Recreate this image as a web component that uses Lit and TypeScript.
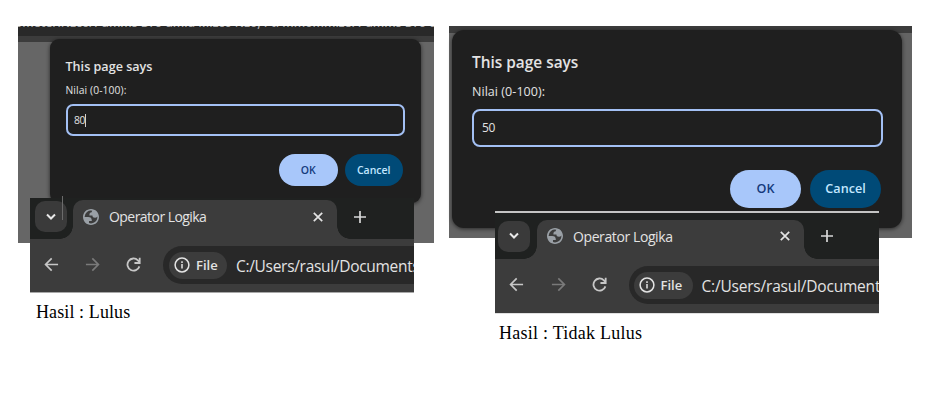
import { LitElement, html, css, svg } from "lit";
import { customElement, property } from "lit/decorators.js";

@customElement("prompt-dialog")
class PromptDialog extends LitElement {
  @property() value = "";
  @property({ type: Boolean }) caret = false;

  static styles = css`
    :host {
      display: flex;
      flex-direction: column;
      box-sizing: border-box;
      background: #1f1f1f;
      border-radius: var(--r);
      box-shadow: 0 1px 4px rgba(0, 0, 0, 0.6);
      font-family: "Open Sans", "Noto Sans", sans-serif;
      color: #e3e3e3;
      white-space: nowrap;
      padding: var(--pad);
    }
    .title {
      font-weight: 600;
      font-size: var(--title);
      line-height: var(--title-lh);
    }
    .label {
      font-size: var(--label);
      line-height: var(--label-lh);
      letter-spacing: var(--label-ls, 0);
    }
    .field {
      box-sizing: border-box;
      height: var(--field-h);
      margin-top: var(--field-mt);
      border: 2px solid #a3c0f4;
      border-radius: var(--field-r);
      display: flex;
      align-items: center;
      padding-left: var(--field-pad);
      font-size: var(--value);
      letter-spacing: var(--value-ls, 0);
    }
    .caret {
      width: 1px;
      height: 13px;
      background: #d0d0d0;
    }
    .actions {
      display: flex;
      justify-content: flex-end;
      gap: var(--btn-gap);
      margin-top: var(--btn-mt);
      padding-right: 2px;
    }
    .btn {
      width: var(--btn-w);
      height: var(--btn-h);
      border-radius: 99px;
      display: flex;
      align-items: center;
      justify-content: center;
      font-weight: 600;
      font-size: var(--btn-fs);
      background: #004a77;
      color: #c2e7ff;
    }
    .ok {
      background: #a8c7fa;
      color: #143a7c;
    }
  `;

  render() {
    return html`
      <div class="title">This page says</div>
      <div class="label">Nilai (0-100):</div>
      <div class="field">
        <span>${this.value}</span>${this.caret ? html`<span class="caret"></span>` : ""}
      </div>
      <div class="actions">
        <div class="btn ok">OK</div>
        <div class="btn">Cancel</div>
      </div>
    `;
  }
}

const icon = (cls: string, box: string, body: unknown) =>
  html`<svg class=${cls} viewBox=${box} fill="none">${body}</svg>`;

@customElement("browser-strip")
class BrowserStrip extends LitElement {
  static styles = css`
    :host {
      display: flex;
      flex-direction: column;
      box-sizing: border-box;
      overflow: hidden;
      background: #3c3c3c;
      font-family: "Open Sans", "Noto Sans", sans-serif;
      color: #e3e3e3;
      white-space: nowrap;
    }
    svg {
      display: block;
      flex: none;
    }
    .tabs {
      display: flex;
      height: var(--tabs-h);
      flex: none;
      background: #1f2120;
    }
    .left {
      box-sizing: border-box;
      width: var(--left-w);
      flex: none;
      padding: var(--menu-pad);
      background: radial-gradient(circle at 0 0, transparent 12.5px, #3c3c3c 13px) right bottom / 13px 13px no-repeat;
    }
    .menu {
      width: 32px;
      height: 31px;
      border-radius: 10px;
      background: #3a3a3a;
      display: flex;
      align-items: center;
      justify-content: center;
    }
    .tab {
      box-sizing: border-box;
      width: var(--tab-w);
      flex: none;
      margin-top: var(--tab-mt);
      border-radius: 10px 10px 0 0;
      background: #3c3c3c;
      display: flex;
      align-items: center;
      padding: 0 14px 6px 10px;
    }
    .name {
      font-size: 14px;
      letter-spacing: var(--name-ls);
      margin-left: 10px;
      flex: 1;
    }
    .rest {
      flex: 1;
      display: flex;
      padding: var(--plus-pad);
      background: radial-gradient(circle at 100% 0, transparent 12.5px, #3c3c3c 13px) left bottom / 13px 13px no-repeat;
    }
    .bar {
      flex: 1;
      display: flex;
      padding: 7px 0 0 14px;
      align-items: flex-start;
    }
    .nav {
      display: flex;
      gap: var(--nav-gap);
      padding-top: 11px;
      width: var(--nav-w);
      flex: none;
    }
    .omni {
      box-sizing: border-box;
      height: 38px;
      flex: none;
      width: 400px;
      border-radius: 19px;
      background: #282828;
      display: flex;
      align-items: center;
      padding-left: var(--omni-pad);
    }
    .chip {
      box-sizing: border-box;
      width: var(--chip-w);
      height: 27px;
      flex: none;
      border-radius: 14px;
      background: #3c3c3c;
      display: flex;
      align-items: center;
      padding-left: 5px;
      gap: 6px;
      font-size: 13px;
      font-weight: 600;
    }
    .url {
      font-size: 15.5px;
      letter-spacing: var(--url-ls);
      margin-left: 9px;
      padding-top: 1px;
    }
    .i16 { width: 16px; height: 16px; }
    .nav .i16 { width: 15px; height: 15px; }
    .i10 { width: 10px; height: 10px; }
    .i12 { width: 12px; height: 12px; }
  `;

  render() {
    return html`
      <div class="tabs">
        <div class="left">
          <div class="menu">
            ${icon("i10", "0 0 10 10", svg`<path d="M1 2.500l4 4 4-4" stroke="#e8e8e8" stroke-width="2"/>`)}
          </div>
        </div>
        <div class="tab">
          ${icon("i16", "2 2 20 20", svg`<path fill="#9aa0a6" fill-rule="evenodd" d="M12 2C6.48 2 2 6.48 2 12s4.48 10 10 10 10-4.480 10-10S17.520 2 12 2zM4 12h4.400c3.407.022 4.922 1.730 4.543 5.127H9.488v2.470a8.004 8.004 0 0 0 10.498-8.083C19.327 12.504 18.332 13 17 13c-2.137 0-3.206-.916-3.206-2.750h-3.748c-.274-2.728.683-4.092 2.870-4.092 0-.975.327-1.597.811-1.970A8.004 8.004 0 0 0 4 12z"/>`)}
          <span class="name">Operator Logika</span>
          ${icon("i10", "0 0 10 10", svg`<path d="M.8.8l8.400 8.400M9.200.8L.8 9.200" stroke="#e3e3e3" stroke-width="1.700"/>`)}
        </div>
        <div class="rest">
          ${icon("i12", "0 0 12 12", svg`<path d="M6 0v12M0 6h12" stroke="#d8d8d8" stroke-width="1.700"/>`)}
        </div>
      </div>
      <div class="bar">
        <div class="nav">
          ${icon("i16", "0 0 16 16", svg`<path d="M15 8H2M8.200 1.500L1.700 8l6.500 6.500" stroke="#c7c7c7" stroke-width="1.800"/>`)}
          ${icon("i16", "0 0 16 16", svg`<path d="M1 8h13M7.800 1.500L14.300 8l-6.500 6.500" stroke="#7a7a7a" stroke-width="1.800"/>`)}
          ${icon("i16", "0 0 16 16", svg`<path d="M14.300 10A6.500 6.500 0 1 1 12.700 3.500L14.500 5.500M14.600 .8v5.600H9" stroke="#c7c7c7" stroke-width="1.900"/>`)}
        </div>
        <div class="omni">
          <div class="chip">
            ${icon("i16", "0 0 16 16", svg`<circle cx="8" cy="8" r="6.900" stroke="#e3e3e3" stroke-width="1.500"/><path d="M8 7v4.600M8 4.300v1.600" stroke="#e3e3e3" stroke-width="1.500"/>`)}
            <span>File</span>
          </div>
          <span class="url">C:/Users/rasul/Documents</span>
        </div>
      </div>
    `;
  }
}

@customElement("app-root")
class AppRoot extends LitElement {
  static styles = css`
    :host {
      display: block;
      position: relative;
      width: 950px;
      height: 403px;
      overflow: hidden;
      background: #fff;
    }
    .page {
      position: absolute;
      overflow: hidden;
      background: #666;
    }
    .p1 { left: 18px; top: 26px; width: 416px; height: 217px; }
    .p2 { left: 449px; top: 26px; width: 463px; height: 212px; background: #646464; }
    .cut {
      height: 10px;
      background: #292929;
      overflow: hidden;
      display: flex;
      align-items: flex-start;
    }
    .cut span {
      font: 600 12px/12px "Open Sans", sans-serif;
      color: #b0b0b0;
      white-space: nowrap;
      margin-top: -9px;
      margin-left: -3px;
    }
    .edge { height: 6px; background: #3c3c3c; }
    .p2 .edge { height: 7px; }
    prompt-dialog, browser-strip, .result, .mark { position: absolute; }
    .d1 {
      left: 49.5px; top: 39px; width: 371.5px; height: 164px;
      --r: 9px; --pad: 19px 16px 0 16px;
      --title: 12.6px; --title-lh: 17px; --label: 10.3px; --label-lh: 31px; --label-ls: 0.1px;
      --field-h: 32px; --field-mt: -2px; --field-r: 7px; --field-pad: 6.500px; --value: 10.300px; --value-ls: -0.5px;
      --btn-mt: 18px; --btn-w: 58.500px; --btn-h: 32px; --btn-gap: 7px; --btn-fs: 10.500px;
    }
    .d2 {
      left: 452px; top: 29.5px; width: 449.5px; height: 198.5px;
      --r: 12px; --pad: 22px 18.500px 0 20px;
      --title: 15.400px; --title-lh: 21.500px; --label: 12.500px; --label-lh: 37px; --label-ls: 0.05px;
      --field-h: 38.500px; --field-mt: -1.500px; --field-r: 8px; --field-pad: 8px; --value: 12px; --value-ls: -0.4px;
      --btn-mt: 22.500px; --btn-w: 71px; --btn-h: 38px; --btn-gap: 9px; --btn-fs: 12.600px;
    }
    .b1 {
      left: 30px; top: 198px; width: 384px; height: 95px;
      border-bottom: 1px solid #a8a8a8;
      --tabs-h: 41px; --left-w: 43px; --menu-pad: 3px 0 0 4.500px; --tab-w: 263.500px; --tab-mt: 2px;
      --plus-pad: 12.500px 0 0 17px; --nav-gap: 26px; --nav-w: 119px; --omni-pad: 6px; --chip-w: 58px;
      --name-ls: -0.55px; --url-ls: -0.3px;
    }
    .b2 {
      left: 495px; top: 211px; width: 384px; height: 103px;
      border-top: 2px solid #c4c4c4;
      border-bottom: 1px solid #e0e0e0;
      --tabs-h: 46px; --left-w: 42px; --menu-pad: 7.500px 0 0 3px; --tab-w: 267px; --tab-mt: 6.500px;
      --plus-pad: 17px 0 0 17px; --nav-gap: 26.500px; --nav-w: 119.500px; --omni-pad: 5px; --chip-w: 59px;
      --name-ls: -0.4px; --url-ls: -0.2px;
    }
    .result {
      font: 18px/22px "Liberation Serif", serif;
      color: #000;
      white-space: nowrap;
    }
    .r1 { left: 36px; top: 301px; letter-spacing: 0.1px; }
    .r2 { left: 499px; top: 322px; letter-spacing: 0.25px; }
    .mark { left: 62px; top: 196px; width: 1px; height: 24px; background: #6b6b6b; }
  `;

  render() {
    return html`
      <div class="page p1">
        <div class="cut"><span>ometer.Nzco/Pumms Dro um.u Mizco Nzo, Pti mmommizel Pumms Dro um.u /, Pumu.</span></div>
        <div class="edge"></div>
      </div>
      <div class="page p2"><div class="edge"></div></div>
      <prompt-dialog class="d1" value="80" caret></prompt-dialog>
      <prompt-dialog class="d2" value="50"></prompt-dialog>
      <browser-strip class="b1"></browser-strip>
      <div class="mark"></div>
      <browser-strip class="b2"></browser-strip>
      <div class="result r1">Hasil : Lulus</div>
      <div class="result r2">Hasil : Tidak Lulus</div>
    `;
  }
}
